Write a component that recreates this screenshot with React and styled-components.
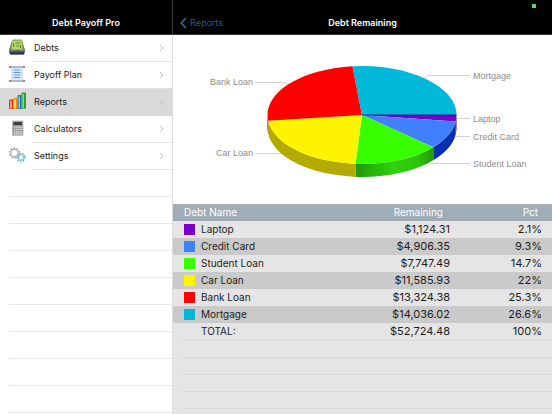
import React from "react";
import styled, {createGlobalStyle} from "styled-components";

const GlobalStyle = createGlobalStyle`
  * {
    box-sizing: border-box;
  }

  body {
    margin: 0;
    background-color: #ffffff;
    font-family: Inter, Roboto, sans-serif;
    font-size: 10px;
    color: #1c1c1c;
  }
`
const Screen = styled.div`
  display: flex;
  flex-direction: row;
  min-height: 100vh;
`
const Sidebar = styled.nav`
  display: flex;
  flex-direction: column;
  flex: 0 0 173px;

  border-right: 1px solid #dcdcdc;
`
const Detail = styled.main`
  display: flex;
  flex-direction: column;
  flex: 1;
  min-width: 0;
`
const Bar = styled.header`
  position: relative;
  display: grid;
  grid-template-columns: 1fr auto 1fr;
  align-items: center;
  height: 35px;
  padding: 11px 7px 0;

  background-color: #000000;
  border-bottom: 1px solid #3a3a3a;
`
const SidebarBar = styled(Bar)`
  margin-right: -1px;
  border-right: 1px solid #3a3a3a;
`
const BarTitle = styled.h1`
  grid-column: 2;
  margin: 0;

  color: #ffffff;
  font-size: 9px;
  font-weight: 600;
  line-height: 12px;
`
const BackLink = styled.a`
  display: flex;
  align-items: center;
  gap: 3px;

  color: #2b5a84;
  font-size: 9px;
  line-height: 12px;
  text-decoration: none;
`
const StatusDot = styled.span`
  position: absolute;
  top: 4px;
  right: 16px;
  width: 4px;
  height: 4px;

  background-color: #55d868;
`
const Menu = styled.ul`
  margin: 0;
  padding: 0;
  list-style: none;
`
const MenuLink = styled.a`
  display: flex;
  align-items: flex-start;
  height: 27px;
  padding-left: 8px;

  background-color: ${props => props.$active ? "#d9d9d9" : "#ffffff"};
  box-shadow: ${props => props.$active ? "0 -1px 0 #d9d9d9" : "none"};
  color: inherit;
  text-decoration: none;
`
const MenuIcon = styled.span`
  display: flex;
  padding-top: 3px;
`
const MenuText = styled.span`
  display: flex;
  flex: 1;
  align-items: center;
  justify-content: space-between;
  height: 27px;
  margin-left: 7px;
  padding: 0 8px 1px 1px;

  border-bottom: 1px solid ${props => props.$active ? "#d9d9d9" : "#e2e2e2"};
  font-size: 9px;
`
const EmptyMenu = styled.div`
  flex: 1;
  margin-left: 9px;

  background: repeating-linear-gradient(#ffffff 0 26px, #e9e9e9 26px 27px);
`
const Chart = styled.svg`
  display: block;
  width: 100%;
  height: 169px;
`
const ChartLabel = styled.text`
  fill: #8c8c8c;
  font-family: "Liberation Sans", Arial, sans-serif;
  font-size: 9px;
  text-anchor: ${props => props.$left ? "end" : "start"};
`
const Table = styled.table`
  width: 100%;

  border-collapse: collapse;
  table-layout: fixed;
  font-size: 10px;
  line-height: 17px;
`
const Head = styled.th`
  width: ${props => props.$width || "auto"};
  height: 17px;
  padding: 0 ${props => props.$right || "0"} 0 11px;

  background-color: #a1adb6;
  color: #ffffff;
  font-weight: 400;
  text-align: ${props => props.$right ? "right" : "left"};
`
const Row = styled.tr`
  background-color: #e5e5e5;

  &:nth-child(even) {
    background-color: #cacaca;
  }

  &:last-child {
    background-color: #e5e5e5;
  }
`
const NameCell = styled.td`
  padding: 0 0 0 11px;
`
const NameWrap = styled.div`
  display: flex;
  align-items: center;
  gap: 6px;
`
const Swatch = styled.span`
  width: 11px;
  height: 11px;

  background-color: ${props => props.$color || "transparent"};
`
const NumberCell = styled.td`
  padding: 0 ${props => props.$right || "10px"} 0 0;
  font-size: 11px;
  text-align: right;
`
const EmptyRows = styled.div`
  flex: 1;
  padding-left: 8px;

  background-color: #e5e5e5;
`
const EmptyLines = styled.div`
  height: 100%;

  background: repeating-linear-gradient(#dadada 0 1px, #e5e5e5 1px 17px);
`

const debts = [
    {name: "Laptop", remaining: "$1,124.31", pct: 2.1, color: "#7800c8", side: "#4a0080"},
    {name: "Credit Card", remaining: "$4,906.35", pct: 9.3, color: "#4080ff", side: "#0030b0"},
    {name: "Student Loan", remaining: "$7,747.49", pct: 14.7, color: "#38ff00", side: "url(#greenSide)"},
    {name: "Car Loan", remaining: "$11,585.93", pct: 22, color: "#fff400", side: "#b5aa00"},
    {name: "Bank Loan", remaining: "$13,324.38", pct: 25.3, color: "#ff0000", side: "#a00000"},
    {name: "Mortgage", remaining: "$14,036.02", pct: 26.6, color: "#00b8d9", side: "#0085a0"},
]

const labels = [
    {text: "Mortgage", x: 300, y: 44, line: "251,43 255,40.5 297,40.5"},
    {text: "Laptop", x: 300, y: 87, line: "283,83.5 297,83.5"},
    {text: "Credit Card", x: 300, y: 105, line: "281,101.5 297,101.5"},
    {text: "Student Loan", x: 300, y: 132, line: "223,125 227,128.5 297,128.5"},
    {text: "Bank Loan", x: 80, y: 50, left: true, line: "82,47.5 111,47.5 115,49"},
    {text: "Car Loan", x: 80, y: 121, left: true, line: "82,118.5 120,118.5 124,116"},
]

const CX = 189
const CY = 80
const RX = 94.5
const RY = 49
const DEPTH = 13

// share runs from 0 to 1, clockwise from three o'clock
let rim = (share) => {
    let angle = share * Math.PI * 2
    return [CX + RX * Math.cos(angle), CY + RY * Math.sin(angle)]
}

let slicePath = (from, to) => {
    let [x1, y1] = rim(from)
    let [x2, y2] = rim(to)
    return `M${CX},${CY} L${x1},${y1} A${RX},${RY} 0 0 1 ${x2},${y2} Z`
}

let sidePath = (from, to) => {
    let [x1, y1] = rim(from)
    let [x2, y2] = rim(Math.min(to, 0.5))
    return `M${x1},${y1} A${RX},${RY} 0 0 1 ${x2},${y2} v${DEPTH} A${RX},${RY} 0 0 0 ${x1},${y1 + DEPTH} Z`
}

let PieChart = () => {
    let start = 0
    let slices = debts.map(debt => {
        let from = start
        start = start + debt.pct / 100
        return {...debt, from: from, to: start}
    })

    return (
        <Chart viewBox="0 0 379 169" role="img" aria-label="Debt Remaining">
            <defs>
                <linearGradient id="greenSide">
                    <stop offset="0" stopColor="#22980c"/>
                    <stop offset="0.5" stopColor="#2ed40a"/>
                    <stop offset="0.8" stopColor="#2cc408"/>
                    <stop offset="1" stopColor="#24980a"/>
                </linearGradient>
            </defs>
            {slices.filter(s => s.from < 0.5).map(s => (
                <path key={s.name} d={sidePath(s.from, s.to)} fill={s.side}/>
            ))}
            {slices.map(s => (
                <path key={s.name} d={slicePath(s.from, s.to)} fill={s.color}/>
            ))}
            <path d={`M${CX},${CY} h${RX}`} stroke="#3818a0" strokeWidth="1"/>
            {labels.map(l => (
                <g key={l.text}>
                    <polyline points={l.line} fill="none" stroke="#808080" strokeOpacity="0.35" strokeWidth="1"/>
                    <ChartLabel x={l.x} y={l.y} $left={l.left}>{l.text}</ChartLabel>
                </g>
            ))}
        </Chart>
    )
}

let DebtsIcon = () => (
    <svg width="18" height="18" viewBox="0 0 18 18">
        <path d="M3 6 L15 6 L17 12 L16 16.5 L2 16.5 L1 12 Z" fill="#5d6b6e"/>
        <path d="M1 12 H17 L16 16.5 H2 Z" fill="#2f3850"/>
        <path d="M3 4 L5 1.5 H13.500 L15 4 L15.500 12 H2.500 Z" fill="#7fa84a"/>
        <path d="M4.500 3 L13.500 2.500 L14.500 11.500 H3.500 Z" fill="#b2d66c"/>
        <path d="M5.500 5 v4 M7.500 5 h4.500 M8 8 h3 M12.500 7 v3" stroke="#5c8a35" strokeWidth="1.200"/>
        <path d="M1 11.500 H6 L7 12.500 H11 L12 11.500 H17 L16.500 13.500 H1.500 Z" fill="#7b8a68"/>
    </svg>
)

let PlanIcon = () => (
    <svg width="18" height="18" viewBox="0 0 18 18">
        <path d="M3.500 2 H14.500 L14 9 L14.500 16 H3.500 L4 9 Z" fill="#dcebfb" stroke="#a6c4e8" strokeWidth="0.600"/>
        <path d="M5.500 5 h7 M5.500 7.500 h7 M5.500 10 h7 M5.500 12.500 h7" stroke="#5f9be0" strokeWidth="1"/>
        <path d="M2 2 H16 M2 16 H16" stroke="#a9b9cf" strokeWidth="1.800"/>
        <path d="M1 2 h2 M15 2 h2 M1 16 h2 M15 16 h2" stroke="#b98350" strokeWidth="2"/>
    </svg>
)

let ReportsIcon = () => (
    <svg width="18" height="18" viewBox="0 0 18 18">
        <path d="M1 8.500 l1 -1 h3 v9.500 H1 Z" fill="#d4421c"/>
        <path d="M2 9 h2 v7.500 h-2 Z" fill="#f49a72"/>
        <path d="M5 7 l1 -1 h3.500 v11 h-4.500 Z" fill="#ee8a10"/>
        <path d="M6 7.500 h2 v9 h-2 Z" fill="#ffd468"/>
        <path d="M9.500 4 l1 -1 h3 v14 h-4 Z" fill="#1f6ea8"/>
        <path d="M10.500 4.500 h1.500 v12 h-1.500 Z" fill="#86c8ee"/>
        <path d="M13.500 1.500 l1 -1 h3.500 v15.500 l-1 1 h-3.500 Z" fill="#2f9d3a"/>
        <path d="M14.500 2 h1.500 v14.500 h-1.500 Z" fill="#8fdc80"/>
    </svg>
)

let CalculatorIcon = () => (
    <svg width="18" height="18" viewBox="0 0 18 18">
        <rect x="4" y="1.500" width="11.500" height="15.500" rx="1" fill="#bdbdbd"/>
        <rect x="5" y="2.500" width="9.500" height="13.500" fill="#8f8f8f"/>
        <rect x="5.500" y="3" width="8.500" height="3" fill="#3b423f"/>
        <path d="M6 8 h8 M6 10.500 h8 M6 13 h8 M6 15 h8" stroke="#e9e9e9" strokeWidth="1.300" strokeDasharray="1.400 0.700"/>
    </svg>
)

let SettingsIcon = () => (
    <svg width="18" height="18" viewBox="0 0 18 18" fill="none">
        <circle cx="6.500" cy="7" r="4.900" stroke="#a2a2a2" strokeWidth="1.600" strokeDasharray="1.550 1.530"/>
        <circle cx="6.500" cy="7" r="3.700" stroke="#b4b4b4" strokeWidth="1.400"/>
        <circle cx="13" cy="11.500" r="3.900" stroke="#5fa9cc" strokeWidth="1.600" strokeDasharray="1.400 1.325"/>
        <circle cx="13" cy="11.500" r="2.700" stroke="#8fcbe6" strokeWidth="1.600"/>
    </svg>
)

let Chevron = () => (
    <svg width="5" height="8" viewBox="0 0 5 8">
        <path d="M1 1 L4 4 L1 7" fill="none" stroke="#c4c4c6" strokeWidth="1"/>
    </svg>
)

const menu = [
    {text: "Debts", Icon: DebtsIcon},
    {text: "Payoff Plan", Icon: PlanIcon},
    {text: "Reports", Icon: ReportsIcon, active: true},
    {text: "Calculators", Icon: CalculatorIcon},
    {text: "Settings", Icon: SettingsIcon},
]

let App = () => {
    return (
        <Screen>
            <GlobalStyle/>
            <Sidebar>
                <SidebarBar>
                    <BarTitle>Debt Payoff Pro</BarTitle>
                </SidebarBar>
                <Menu>
                    {menu.map(({text, Icon, active}) => (
                        <li key={text}>
                            <MenuLink href="#" $active={active}>
                                <MenuIcon>
                                    <Icon/>
                                </MenuIcon>
                                <MenuText $active={active}>
                                    {text}
                                    <Chevron/>
                                </MenuText>
                            </MenuLink>
                        </li>
                    ))}
                </Menu>
                <EmptyMenu/>
            </Sidebar>
            <Detail>
                <Bar>
                    <BackLink href="#">
                        <svg width="7" height="12" viewBox="0 0 7 12">
                            <path d="M6 1 L1 6 L6 11" fill="none" stroke="#2f6ea6" strokeWidth="1.500"/>
                        </svg>
                        Reports
                    </BackLink>
                    <BarTitle as="h2">Debt Remaining</BarTitle>
                    <StatusDot/>
                </Bar>
                <PieChart/>
                <Table>
                    <thead>
                        <tr>
                            <Head>Debt Name</Head>
                            <Head $width="100px" $right="9px">Remaining</Head>
                            <Head $width="100px" $right="14px">Pct</Head>
                        </tr>
                    </thead>
                    <tbody>
                        {debts.map(debt => (
                            <Row key={debt.name}>
                                <NameCell>
                                    <NameWrap>
                                        <Swatch $color={debt.color}/>
                                        {debt.name}
                                    </NameWrap>
                                </NameCell>
                                <NumberCell $right="2px">{debt.remaining}</NumberCell>
                                <NumberCell>{debt.pct}%</NumberCell>
                            </Row>
                        ))}
                        <Row>
                            <NameCell>
                                <NameWrap>
                                    <Swatch/>
                                    TOTAL:
                                </NameWrap>
                            </NameCell>
                            <NumberCell $right="2px">$52,724.48</NumberCell>
                            <NumberCell>100%</NumberCell>
                        </Row>
                    </tbody>
                </Table>
                <EmptyRows>
                    <EmptyLines/>
                </EmptyRows>
            </Detail>
        </Screen>
    )
}
export default App;
